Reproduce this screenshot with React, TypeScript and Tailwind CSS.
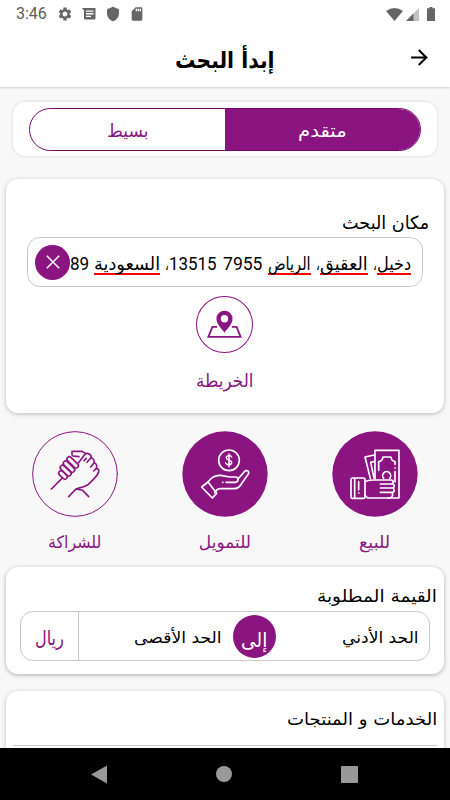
import { useLayoutEffect, useRef, useState } from "react";
import type { ReactNode } from "react";
import { MdArrowForward, MdSdCard, MdSettings, MdShield } from "react-icons/md";

type FitTextProps = {
  children: ReactNode;
  width: number;
  className?: string;
};

// Keeps a label at its designed width whichever Arabic font is available
function FitText({ children, width, className = "" }: FitTextProps) {
  const ref = useRef<HTMLSpanElement>(null);
  const [scale, setScale] = useState(1);

  useLayoutEffect(() => {
    if (ref.current) setScale(width / ref.current.offsetWidth);
  }, [width]);

  return (
    <span className={`flex shrink-0 justify-start ${className}`} style={{ width }} dir="rtl">
      <span
        ref={ref}
        className="inline-block shrink-0 origin-right whitespace-nowrap"
        style={{ transform: `scaleX(${scale})` }}
      >
        {children}
      </span>
    </span>
  );
}

function StatusBar() {
  return (
    <div className="flex h-7 items-center justify-between pl-4 pr-[15px] text-[#666]" dir="ltr">
      <div className="flex items-center">
        <span className="w-[42px] font-[Roboto] text-[16px] leading-7 text-[#5c5c5c]">3:46</span>
        <MdSettings className="-ml-[1px] size-4" />
        <svg className="ml-[9px] h-3 w-[14px]" viewBox="0 0 14 12" fill="currentColor">
          <path
            fillRule="evenodd"
            d="M0 0h13.5v10.5q0 1-1 1H3q-1 0-1-1V2.5ZM4 2.5v1.3h7.5V2.5Zm0 2.6v1.3h7.5V5.1Zm0 2.6V9h5V7.7Z"
          />
        </svg>
        <MdShield className="ml-[9px] size-4" />
        <MdSdCard className="ml-[8px] size-4" />
      </div>
      <div className="flex items-center">
        <svg className="h-[13px] w-[17px]" viewBox="0 0 17 13" fill="currentColor">
          <path d="M0 3Q8.5-3 17 3L8.5 13Z" />
        </svg>
        <svg className="ml-[3px] size-[13px]" viewBox="0 0 13 13" fill="currentColor">
          <path d="M13 0v13H0Z" opacity=".4" />
          <path d="M7.5 5.5V13H0Z" />
        </svg>
        <svg className="ml-[8px] h-[14px] w-2" viewBox="0 0 8 14" fill="currentColor">
          <path d="M2.5 0h3v1.3H8V14H0V1.3h2.5Z" />
        </svg>
      </div>
    </div>
  );
}

function MapIcon() {
  return (
    <svg className="size-[57px]" viewBox="50 20 170 170" fill="none" stroke="#8a1480">
      <circle cx="135" cy="105" r="83.5" strokeWidth="3" />
      <path d="M113 112h-14L87 142h96l-12-30h-14" strokeWidth="5.5" />
      <path
        d="M135 130c-4-9-24-24-24-42a24 24 0 0 1 48 0c0 18-20 33-24 42Zm0-53a11 11 0 1 0 0 22 11 11 0 0 0 0-22Z"
        fill="#8a1480"
        fillRule="evenodd"
        stroke="none"
      />
    </svg>
  );
}

function PartnershipIcon() {
  return (
    <svg
      className="size-[86px]"
      viewBox="35 32 258 258"
      fill="none"
      stroke="#8a1480"
      strokeWidth="4.8"
      strokeLinecap="round"
      strokeLinejoin="round"
    >
      <circle cx="164" cy="161" r="127" strokeWidth="3" />
      <g transform="translate(75 75)">
        <path d="m18 131 32-32" />
        <rect x="-15" y="-7" width="30" height="14" rx="7" transform="translate(53 89) rotate(44)" />
        <rect x="-20" y="-7" width="40" height="14" rx="7" transform="translate(61 76) rotate(44)" />
        <rect x="-21" y="-7" width="42" height="14" rx="7" transform="translate(71 64) rotate(44)" />
        <rect x="-21" y="-7" width="42" height="14" rx="7" transform="translate(82 51) rotate(44)" />
        <path d="M80 29V18h30l10 6M83 32l18 2" />
        <path d="m99 53 20-26c7-7 21 1 18 10l-12 14" />
        <path d="m116 46 7-7M137 37c8 3 12 10 8 17l-9 11M147 52c8 5 9 12 5 18l-7 7M153 69c8 1 10 9 5 15" />
        <path d="M158 84c-4 10-17 22-29 33-10 8-26 10-37 14l-22 23M92 131l20 4 18 19" />
      </g>
    </svg>
  );
}

function FinanceIcon() {
  return (
    <svg
      className="size-[86px]"
      viewBox="35 32 258 258"
      fill="none"
      stroke="white"
      strokeWidth="5"
      strokeLinecap="round"
      strokeLinejoin="round"
    >
      <circle cx="164" cy="161" r="128" fill="#8a1480" stroke="none" />
      <circle cx="176" cy="120" r="31" />
      <path d="M184 110c-4-7-17-5-16 3 1 8 16 5 16 13 0 9-14 10-18 2M176 101v38" strokeWidth="4.5" />
      <path d="m94 200 19-15 26 34-13 14Z" />
      <path d="M113 185c8-11 19-20 34-20 18 0 19 5 34 5h15c10 0 9 15-1 16h-28M157 186h1" />
      <path d="M139 209c5-6 10-4 17-4h37c12 0 18-9 24-20l17-24c5-10-7-13-12-7l-20 23M139 209l-6 8" />
    </svg>
  );
}

function SaleIcon() {
  return (
    <svg
      className="size-[86px]"
      viewBox="35 32 258 258"
      fill="none"
      stroke="white"
      strokeWidth="5"
      strokeLinecap="round"
      strokeLinejoin="round"
    >
      <circle cx="164" cy="161" r="128" fill="#8a1480" stroke="none" />
      <path d="M164 176V90h72v143h-34M161 104l-27 6 16 64M160 124l-9 2 10 47" />
      <path d="M175 150v-26c9-1 12-5 13-14h24c1 9 5 13 12 14v8M224 154v30" />
      <path d="M224 143h1M190 174a12 12 0 1 1 18 0" />
      <rect x="92" y="173" width="42" height="61" rx="5" />
      <path d="M103 174v59M115 184v25M115 218h1" />
      <path d="M134 184c8-5 15-5 23-5h55c9 0 9 12 0 12h-32M212 191h3c9 0 9 12 0 12h-35M215 203c9 0 9 13 0 13h-35M213 216c8 5 3 17-6 17h-65l-8-8" />
    </svg>
  );
}

function ModeSwitch() {
  return (
    <div className="mx-[13px] mt-[15px] h-[54px] rounded-xl bg-white px-4 pt-1.5 shadow-[0_0_3px_rgba(0,0,0,0.16)]">
      <div className="flex h-[43px] overflow-hidden rounded-full border border-[#76076d] bg-white text-[18px]">
        <button className="flex flex-1 items-center justify-center bg-[#8a1480] text-white">
          <FitText width={49} className="pt-0.5">
            متقدم
          </FitText>
        </button>
        <button className="flex flex-1 items-center justify-center text-[#8a1480]">
          <FitText width={42} className="pt-0.5">
            بسيط
          </FitText>
        </button>
      </div>
    </div>
  );
}

const address = [
  { text: "دخيل", width: 34, misspelled: true, space: "ml-0" },
  { text: "،", width: 4, misspelled: false, space: "ml-[5px]" },
  { text: "العقيق", width: 48, misspelled: true, space: "ml-0" },
  { text: "،", width: 4, misspelled: false, space: "ml-[5px]" },
  { text: "الرياض", width: 43, misspelled: true, space: "ml-[6px]" },
  { text: "7955", width: 39, misspelled: false, space: "ml-[6px]" },
  { text: "13515", width: 48, misspelled: false, space: "ml-0" },
  { text: "،", width: 4, misspelled: false, space: "ml-[5px]" },
  { text: "السعودية", width: 66, misspelled: true, space: "ml-[5px]" },
  { text: "89", width: 19, misspelled: false, space: "ml-0" },
];

function LocationCard() {
  return (
    <section className="mx-1.5 mt-[23px] h-[234px] rounded-xl bg-white pt-[29px] shadow-[0_1px_4px_rgba(0,0,0,0.25)]">
      <h2 className="pr-[15px] text-[18px] leading-[29px]">
        <FitText width={87}>مكان البحث</FitText>
      </h2>
      <div className="mx-[21px] flex h-[50px] items-center justify-between rounded-[13px] border border-[#c9cace] pl-[7px] pr-[11px]">
        <div className="flex pt-[3px] font-[Roboto,'DejaVu_Sans',sans-serif] text-[18px] leading-6">
          {address.map((word, i) => (
            <span
              key={i}
              className={
                word.misspelled
                  ? `${word.space} h-[23px] shadow-[inset_0_-2px_0_#f00]`
                  : word.space
              }
            >
              <FitText width={word.width}>{word.text}</FitText>
            </span>
          ))}
        </div>
        <button className="flex size-[35px] shrink-0 items-center justify-center rounded-full bg-[#8a1480]">
          <svg className="size-[14px]" viewBox="0 0 14 14" stroke="white" strokeWidth="1.5">
            <path d="m.8.8 12.4 12.4M13.2.8.8 13.2" />
          </svg>
        </button>
      </div>
      <div className="mt-[9px] flex flex-col items-center pr-px text-[#8a1480]">
        <MapIcon />
        <FitText width={57} className="mt-[14px] text-[18px] leading-7">
          الخريطة
        </FitText>
      </div>
    </section>
  );
}

const offers = [
  { label: "للبيع", width: 31, icon: <SaleIcon /> },
  { label: "للتمويل", width: 52, icon: <FinanceIcon /> },
  { label: "للشراكة", width: 53, icon: <PartnershipIcon /> },
];

function OfferTypes() {
  return (
    <div className="mt-[18px] flex h-[136px]">
      {offers.map((offer) => (
        <button key={offer.label} className="flex flex-1 flex-col items-center text-[#8a1480]">
          {offer.icon}
          <FitText width={offer.width} className="mt-[11px] text-[17px] leading-7">
            {offer.label}
          </FitText>
        </button>
      ))}
    </div>
  );
}

function PriceCard() {
  return (
    <section className="mx-1.5 h-[107px] rounded-xl bg-white pt-[14px] shadow-[0_1px_4px_rgba(0,0,0,0.3)]">
      <h2 className="pr-[7px] text-[17px] leading-[30px]">
        <FitText width={120}>القيمة المطلوبة</FitText>
      </h2>
      <div className="mx-[14px] flex h-[50px] items-center rounded-[13px] border border-[#c9cace] text-[16px]">
        <div className="w-[153px] pr-[10px] pt-1">
          <FitText width={77}>الحد الأدني</FitText>
        </div>
        <div className="flex size-[43px] shrink-0 items-center justify-center rounded-full bg-[#8a1480] pt-2 text-[20px] text-white">
          <FitText width={26}>إلى</FitText>
        </div>
        <div className="flex-1 pr-[11px] pt-1">
          <FitText width={88}>الحد الأقصى</FitText>
        </div>
        <div className="flex h-full w-[58px] items-center justify-center border-r border-[#c9cace] pt-1 text-[20px] text-[#8a1480]">
          <FitText width={29}>ريال</FitText>
        </div>
      </div>
    </section>
  );
}

function ServicesCard() {
  return (
    <section className="mx-1.5 mt-[17px] h-[70px] rounded-t-xl bg-white px-[7px] pt-[13px] shadow-[0_1px_4px_rgba(0,0,0,0.25)]">
      <h2 className="h-[42px] border-b border-[#c9cace] text-[17px] leading-[30px]">
        <FitText width={150}>الخدمات و المنتجات</FitText>
      </h2>
    </section>
  );
}

function NavigationBar() {
  return (
    <nav className="flex h-[52px] items-center justify-between bg-black pl-[91px] pr-[92px]" dir="ltr">
      <svg className="h-[19px] w-4" viewBox="0 0 16 19" fill="#999">
        <path d="M16 .5v18L0 9.5Z" />
      </svg>
      <span className="size-4 rounded-full bg-[#999]" />
      <span className="size-[17px] rounded-[1px] bg-[#999]" />
    </nav>
  );
}

export default function App() {
  return (
    <div
      dir="rtl"
      className="flex h-[800px] w-[450px] flex-col overflow-hidden bg-[#f8f8f8] font-['DejaVu_Sans',sans-serif] text-black"
    >
      <header className="h-[87px] shrink-0 bg-white shadow-[0_1px_2px_rgba(0,0,0,0.18)]">
        <StatusBar />
        <div className="flex h-[59px] items-center pr-[18px]">
          <MdArrowForward className="size-[25px]" />
          <h1 className="mr-[132px] pt-1.5 text-[23px] font-bold">
            <FitText width={100}>إبدأ البحث</FitText>
          </h1>
        </div>
      </header>
      <main className="min-h-0 flex-1 overflow-hidden">
        <ModeSwitch />
        <LocationCard />
        <OfferTypes />
        <PriceCard />
        <ServicesCard />
      </main>
      <NavigationBar />
    </div>
  );
}
